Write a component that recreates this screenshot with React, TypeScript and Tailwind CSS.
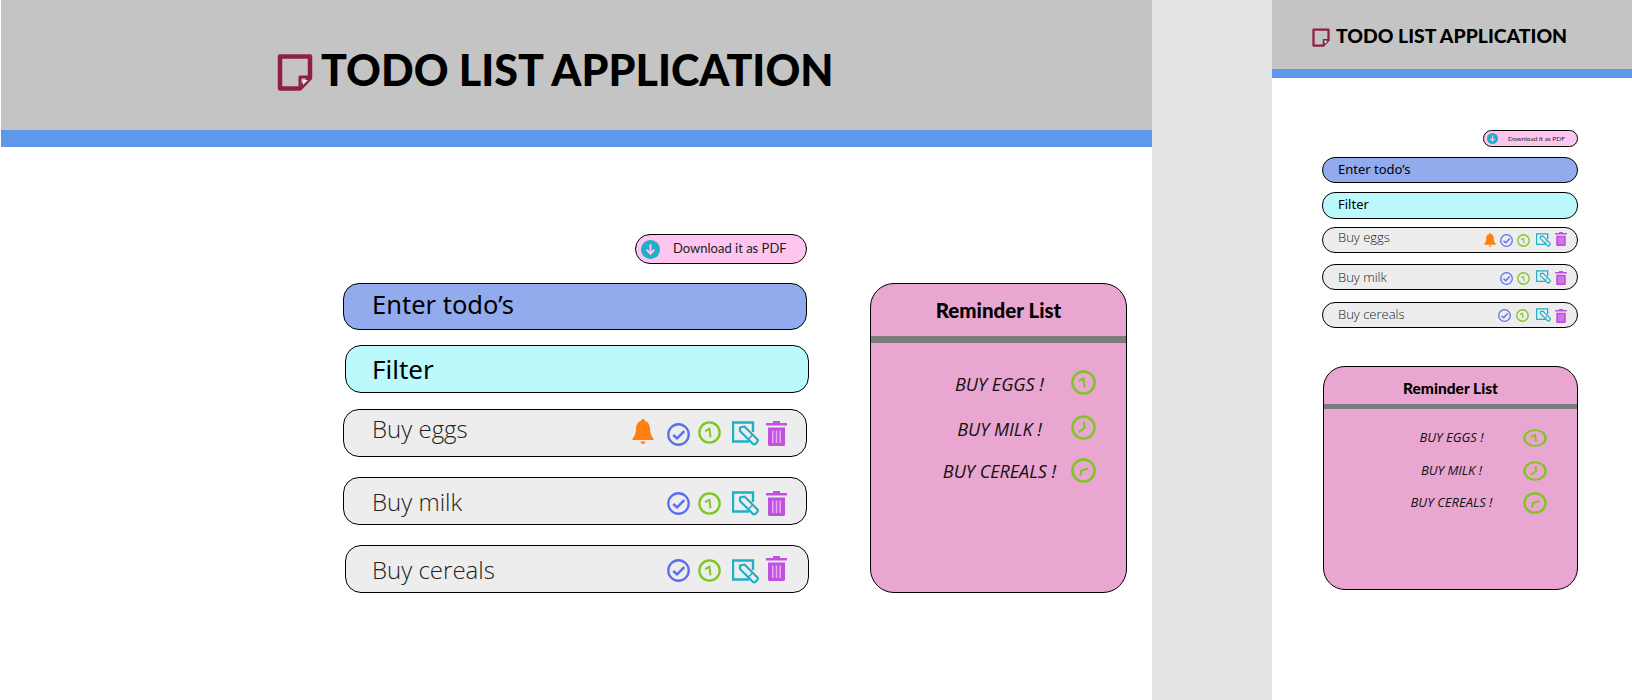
import React from 'react';

type IconProps = { className?: string };

const NoteIcon: React.FC<IconProps> = ({ className }) => (
  <svg viewBox="0 0 36 37" fill="none" className={className}>
    <path d="M3 2.5H33V24L23 34.5H3Z" stroke="#8e2040" strokeWidth="4.5" strokeLinejoin="round" />
    <path d="M33 23H23V34" stroke="#8e2040" strokeWidth="3" strokeLinejoin="round" />
    <path d="M26 26H31L26 31Z" fill="#ececec" />
  </svg>
);

const BellIcon: React.FC<IconProps> = ({ className }) => (
  <svg viewBox="0 0 22 25" className={className} fill="#ff7f0f">
    <path d="M11 0C12.3 0 13 .9 13 2C16.6 3 17.8 6 18 10C18.2 14 19 17 21.5 19.5V21H.5V19.5C3 17 3.8 14 4 10C4.2 6 5.4 3 9 2C9 .9 9.7 0 11 0Z" />
    <path d="M8.5 22.5H13.5C13.3 24 12.3 25 11 25C9.7 25 8.7 24 8.5 22.5Z" />
  </svg>
);

const CheckIcon: React.FC<IconProps> = ({ className }) => (
  <svg viewBox="0 0 24 24" fill="none" stroke="#5a6ff0" className={className}>
    <circle cx="12" cy="12" r="10.7" strokeWidth="2.4" />
    <path d="M6.5 12.5L10.5 16L18 8.5" strokeWidth="2.6" />
  </svg>
);

const ClockIcon: React.FC<IconProps & { hands?: string }> = ({ className, hands = 'M7.5 10.5L12 8L13 17' }) => (
  <svg viewBox="0 0 24 24" fill="none" stroke="#7ec71e" preserveAspectRatio="none" className={className}>
    <circle cx="12" cy="12" r="10.6" strokeWidth="2.4" />
    <path d={hands} strokeWidth="2" />
  </svg>
);

const EditIcon: React.FC<IconProps & { bg?: string }> = ({ className, bg = '#ededed' }) => (
  <svg viewBox="0 0 27 25" fill="none" stroke="#1fb0c8" className={className}>
    <path d="M21 11V1.5H1V20.5H17" strokeWidth="2.4" />
    <path d="M8 6.5L12.5 5.5L25.5 18.5C26.2 19.5 25.8 20.5 25 21.3L23.5 22.8C22.7 23.6 21.5 23.6 20.8 22.8L8 10Z" fill={bg} strokeWidth="2.2" strokeLinejoin="round" />
    <path d="M20.5 14L16.5 18" strokeWidth="1.6" />
  </svg>
);

const TrashIcon: React.FC<IconProps> = ({ className }) => (
  <svg viewBox="0 0 21 25" className={className} fill="#bf50e0">
    <path d="M7 0H14V2H21V4.5H0V2H7Z" />
    <path d="M2 6.5H19V23.5C19 24.4 18.4 25 17.5 25H3.5C2.6 25 2 24.4 2 23.5Z" />
    <path d="M6 9.5H7.6V22H6ZM9.7 9.5H11.3V22H9.7ZM13.4 9.5H15V22H13.4Z" fill="#e3a8f0" />
  </svg>
);

const DownloadIcon: React.FC<IconProps> = ({ className }) => (
  <svg viewBox="0 0 20 20" fill="none" className={className}>
    <circle cx="10" cy="10" r="10" fill="#1fb0c8" />
    <path d="M10 4.5V14M5.8 10.2L10 14.5L14.2 10.2" stroke="#fdc5f0" strokeWidth="2" />
  </svg>
);

const HAND_ONE = 'M7.5 10.5L12 8L13 17';
const HAND_TWO = 'M7.5 16.5L13 12.5L12.5 6.5';
const HAND_THREE = 'M9 17L10 12L16.5 10';

const App: React.FC = () => {
  return (
    <div className="flex h-[700px] w-[1632px] overflow-hidden bg-white text-black">
      {/* Desktop frame */}
      <div className="ml-px flex h-full w-[1151px] flex-col">
        <header className="flex h-[130px] items-start bg-[#c4c4c4] pl-[276px] pt-[54px]">
          <NoteIcon className="h-[37px] w-[36px]" />
          <h1 className="ml-[8px] font-['Lato',sans-serif] text-[43px] leading-[32px] font-black">TODO LIST APPLICATION</h1>
        </header>
        <div className="h-[17px] bg-[#5f97ea]" />

        <div className="flex pl-[342px] pt-[87px]">
          <div className="flex w-[466px] flex-col">
            <button className="ml-[292px] flex h-[30px] w-[172px] items-center rounded-[15px] border border-black bg-[#fdc5f0] pl-[5px]">
              <DownloadIcon className="h-[19px] w-[19px]" />
              <span className="ml-[13px] font-['Lato',sans-serif] text-[13px] text-[#222]">Download it as PDF</span>
            </button>

            <div className="mt-[19px] flex h-[47px] w-[464px] items-center rounded-[16px] border border-black bg-[#91abed] pb-[5px] pl-[28px] font-['Noto_Sans',sans-serif] text-[25.5px]">Enter todo’s</div>
            <div className="ml-[2px] mt-[15px] flex h-[48px] w-[464px] items-center rounded-[16px] border border-black bg-[#bbf9fd] pl-[26px] font-['Noto_Sans',sans-serif] text-[26px]">Filter</div>

            <div className="mt-[16px] flex h-[48px] w-[464px] items-center rounded-[16px] border border-black bg-[#ededed] pl-[28px] pr-[19px]">
              <span className="mb-[8px] grow font-['Open_Sans',sans-serif] text-[24px] font-light text-[#222]">Buy eggs</span>
              <BellIcon className="mb-[3px] h-[25px] w-[22px]" />
              <CheckIcon className="ml-[13px] mt-[3px] h-[23px] w-[23px]" />
              <ClockIcon className="ml-[8px] mb-[1px] h-[23px] w-[23px]" />
              <EditIcon className="ml-[11px] h-[25px] w-[27px]" />
              <TrashIcon className="ml-[7px] h-[25px] w-[21px]" />
            </div>

            <div className="mt-[20px] flex h-[48px] w-[464px] items-center rounded-[16px] border border-black bg-[#ededed] pl-[28px] pr-[19px]">
              <span className="mt-[2px] grow font-['Open_Sans',sans-serif] text-[24px] font-light text-[#222]">Buy milk</span>
              <CheckIcon className="mt-[5px] h-[23px] w-[23px]" />
              <ClockIcon className="ml-[8px] mt-[5px] h-[23px] w-[23px]" />
              <EditIcon className="ml-[11px] mt-[4px] h-[25px] w-[27px]" />
              <TrashIcon className="ml-[7px] mt-[4px] h-[25px] w-[21px]" />
            </div>

            <div className="ml-[2px] mt-[20px] flex h-[48px] w-[464px] items-center rounded-[16px] border border-black bg-[#ededed] pl-[26px] pr-[21px]">
              <span className="mt-[2px] grow font-['Open_Sans',sans-serif] text-[24px] font-light text-[#222]">Buy cereals</span>
              <CheckIcon className="mt-[2px] h-[23px] w-[23px]" />
              <ClockIcon className="ml-[8px] mt-[2px] h-[23px] w-[23px]" />
              <EditIcon className="ml-[11px] mt-[4px] h-[25px] w-[27px]" />
              <TrashIcon className="ml-[7px] mb-[1px] h-[25px] w-[21px]" />
            </div>
          </div>

          <aside className="ml-[61px] mt-[49px] h-[310px] w-[257px] rounded-[24px] border border-black bg-[#e9a6d0]">
            <h2 className="pt-[14px] text-center font-['Lato',sans-serif] text-[20.5px] leading-[24px] font-black">Reminder List</h2>
            <div className="mt-[14px] h-[7px] bg-[#7b7b7b]" />
            <ul className="font-['Open_Sans',sans-serif] text-[18px] italic text-[#111]">
              <li className="mt-[23px] grid h-[26px] grid-cols-[1fr_26px] items-center pr-[29px] pl-[58px] text-center">
                <span className="mt-[5px] mr-[1px]">BUY EGGS !</span>
                <ClockIcon hands={HAND_ONE} className="h-[25px] w-[25px]" />
              </li>
              <li className="mt-[19px] grid h-[26px] grid-cols-[1fr_26px] items-center pr-[29px] pl-[58px] text-center">
                <span className="mt-[5px] mr-[1px]">BUY MILK !</span>
                <ClockIcon hands={HAND_TWO} className="h-[25px] w-[25px]" />
              </li>
              <li className="mt-[18px] grid h-[26px] grid-cols-[1fr_26px] items-center pr-[29px] pl-[58px] text-center">
                <span className="mt-[3px] mr-[1px]">BUY CEREALS !</span>
                <ClockIcon hands={HAND_THREE} className="h-[25px] w-[25px]" />
              </li>
            </ul>
          </aside>
        </div>
      </div>

      {/* Gutter between frames */}
      <div className="h-full w-[120px] bg-[#e3e3e3]" />

      {/* Mobile frame */}
      <div className="flex h-full w-[360px] flex-col">
        <header className="flex h-[69px] items-start bg-[#c4c4c4] pl-[40px] pt-[28px]">
          <NoteIcon className="h-[19px] w-[18px]" />
          <h1 className="ml-[6px] font-['Lato',sans-serif] text-[19.4px] leading-[16px] font-black">TODO LIST APPLICATION</h1>
        </header>
        <div className="h-[9px] bg-[#5f97ea]" />

        <div className="flex flex-col pl-[50px] pt-[52px]">
          <button className="ml-[161px] flex h-[17px] w-[95px] items-center rounded-[9px] border border-black bg-[#fdc5f0] pl-[3px]">
            <DownloadIcon className="h-[11px] w-[11px]" />
            <span className="ml-[10px] font-['Lato',sans-serif] text-[6.5px] text-[#222]">Download it as PDF</span>
          </button>

          <div className="mt-[10px] flex h-[26px] w-[256px] items-center rounded-[13px] border border-black bg-[#91abed] pb-[1px] pl-[15px] font-['Noto_Sans',sans-serif] text-[13px]">Enter todo’s</div>
          <div className="mt-[9px] flex h-[27px] w-[256px] items-center rounded-[13px] border border-black bg-[#bbf9fd] pb-[1px] pl-[15px] font-['Noto_Sans',sans-serif] text-[13px]">Filter</div>

          <div className="mt-[8px] flex h-[26px] w-[256px] items-center rounded-[13px] border border-black bg-[#ededed] pl-[15px] pr-[10px]">
            <span className="mb-[5px] grow font-['Open_Sans',sans-serif] text-[13px] font-light text-[#222]">Buy eggs</span>
            <BellIcon className="h-[14px] w-[12px]" />
            <CheckIcon className="ml-[4px] h-[13px] w-[13px]" />
            <ClockIcon className="ml-[4px] h-[13px] w-[13px]" />
            <EditIcon className="ml-[6px] mb-[1px] h-[14px] w-[15px]" />
            <TrashIcon className="ml-[4px] mb-[3px] h-[14px] w-[12px]" />
          </div>

          <div className="mt-[11px] flex h-[26px] w-[256px] items-center rounded-[13px] border border-black bg-[#ededed] pl-[15px] pr-[10px]">
            <span className="mt-[1px] grow font-['Open_Sans',sans-serif] text-[13px] font-light text-[#222]">Buy milk</span>
            <CheckIcon className="mt-[2px] h-[13px] w-[13px]" />
            <ClockIcon className="ml-[4px] mt-[2px] h-[13px] w-[13px]" />
            <EditIcon className="ml-[6px] h-[14px] w-[15px]" />
            <TrashIcon className="ml-[4px] mt-[2px] h-[14px] w-[12px]" />
          </div>

          <div className="mt-[12px] flex h-[26px] w-[256px] items-center rounded-[13px] border border-black bg-[#ededed] pl-[15px] pr-[10px]">
            <span className="mb-[1px] grow font-['Open_Sans',sans-serif] text-[13px] font-light text-[#222]">Buy cereals</span>
            <CheckIcon className="h-[13px] w-[13px]" />
            <ClockIcon className="ml-[5px] h-[13px] w-[13px]" />
            <EditIcon className="ml-[7px] h-[14px] w-[15px]" />
            <TrashIcon className="ml-[4px] mt-[2px] h-[14px] w-[12px]" />
          </div>

          <aside className="ml-[1px] mt-[38px] h-[224px] w-[255px] rounded-[22px] border border-black bg-[#e9a6d0]">
            <h2 className="pt-[11px] text-center font-['Lato',sans-serif] text-[15.5px] leading-[20px] font-black">Reminder List</h2>
            <div className="mt-[6px] h-[5px] bg-[#7b7b7b]" />
            <ul className="font-['Open_Sans',sans-serif] text-[13px] italic text-[#111]">
              <li className="mt-[19px] grid h-[18px] grid-cols-[1fr_24px] items-center pr-[30px] pl-[56px] text-center">
                <span>BUY EGGS !</span>
                <ClockIcon hands={HAND_ONE} className="h-[18px] w-[24px]" />
              </li>
              <li className="mt-[15px] grid h-[18px] grid-cols-[1fr_24px] items-center pr-[30px] pl-[56px] text-center">
                <span>BUY MILK !</span>
                <ClockIcon hands={HAND_TWO} className="h-[20px] w-[24px]" />
              </li>
              <li className="mt-[13px] grid h-[18px] grid-cols-[1fr_24px] items-center pr-[30px] pl-[56px] text-center">
                <span>BUY CEREALS !</span>
                <ClockIcon hands={HAND_THREE} className="h-[22px] w-[24px]" />
              </li>
            </ul>
          </aside>
        </div>
      </div>
    </div>
  );
};

export default App;
